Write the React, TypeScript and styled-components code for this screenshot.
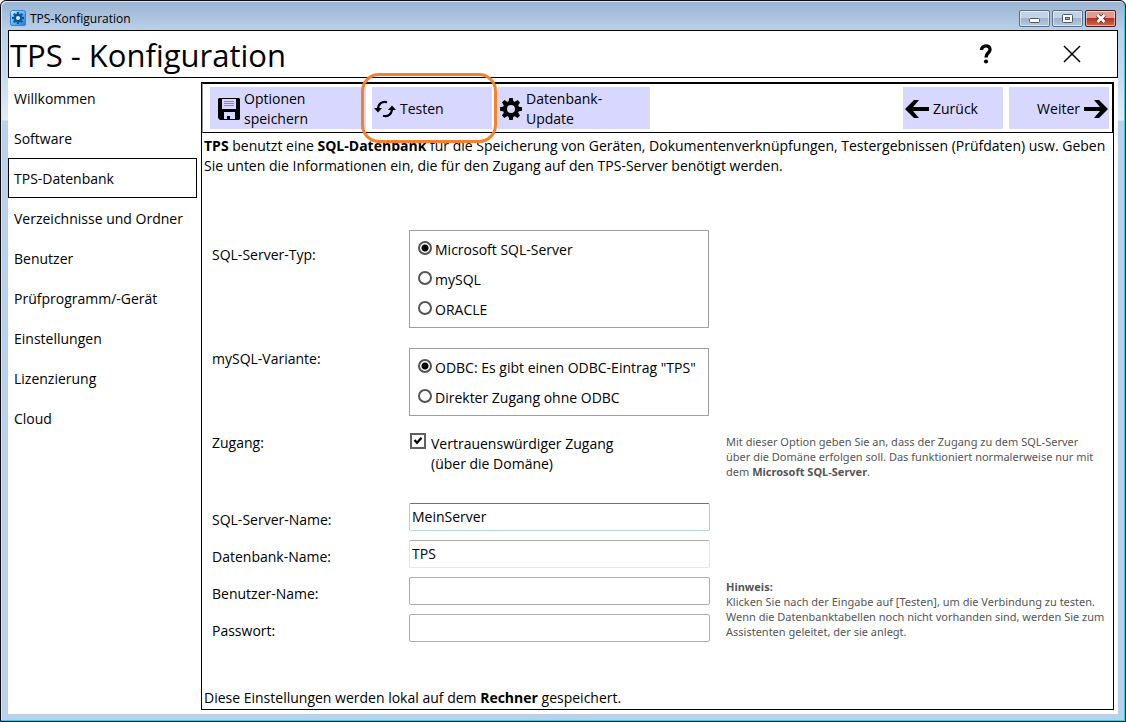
import React, { useState } from "react";
import styled, { createGlobalStyle, css } from "styled-components";

const GlobalStyle = createGlobalStyle`
  *, *::before, *::after { box-sizing: border-box; }
  body {
    margin: 0;
    background: #fff;
    color: #000;
    font-family: "Open Sans", "Noto Sans", sans-serif;
    font-size: 14px;
    line-height: 20px;
  }
  button, input { font: inherit; color: inherit; }
`;

const Window = styled.div`
  display: flex;
  flex-direction: column;
  min-height: 100vh;
  padding: 0 7px 7px;
  border: 1px solid #0c0c10;
  border-radius: 6px 6px 0 0;
  background: linear-gradient(
    #9ab3d0 0,
    #b9d1ea 30px,
    #c9dcf0 80px,
    #e2ecf7 119px,
    #b9d1ea 120px
  );
  box-shadow: inset -1px -1px 0 #2fd0ee, inset 1px 1px 0 #dce8f4;
`;

const TitleBar = styled.div`
  display: flex;
  align-items: center;
  gap: 4px;
  height: 29px;
  padding: 5px 2px 0;
  font-size: 12px;
  line-height: 16px;
`;

const WindowTitle = styled.span`
  flex: 1;
  padding-top: 1px;
`;

const Controls = styled.div`
  display: flex;
  gap: 2px;
`;

const ControlButton = styled.button<{ $danger?: boolean }>`
  display: flex;
  align-items: center;
  justify-content: center;
  width: 31px;
  height: 17px;
  padding: 0;
  border: 1px solid ${(p) => (p.$danger ? "#4a1f25" : "#5b6f86")};
  border-radius: 2px;
  box-shadow: inset 0 0 0 1px rgba(255, 255, 255, 0.5);
  background: ${(p) =>
    p.$danger
      ? "linear-gradient(#dd9c90 0 45%, #b9301c 50%, #cf6a50)"
      : "linear-gradient(#c3d3e6 0 45%, #9db3cd 50%, #b5cade)"};
`;

const Header = styled.header`
  display: flex;
  align-items: center;
  height: 48px;
  border: 1px solid #000;
  background: #fff;
`;

const Heading = styled.h1`
  flex: 1;
  margin: 0;
  padding: 2px 0 0 1px;
  font-size: 31px;
  font-weight: 400;
  line-height: 44px;
`;

const HeaderActions = styled.div`
  display: flex;
  gap: 50px;
  padding-right: 27px;
`;

const HeaderButton = styled.button`
  display: flex;
  align-items: center;
  justify-content: center;
  width: 36px;
  height: 36px;
  padding: 0;
  border: 0;
  background: none;
`;

const Body = styled.div`
  display: grid;
  grid-template-columns: 189px 1fr;
  gap: 4px;
  flex: 1;
  padding-right: 4px;
  background: #fff;
`;

const Nav = styled.nav`
  display: flex;
  flex-direction: column;
`;

const NavLink = styled.a<{ $active?: boolean }>`
  height: 40px;
  padding: 10px 5px 8px;
  border: 1px solid ${(p) => (p.$active ? "#000" : "transparent")};
  color: #000;
  text-decoration: none;
`;

const Panel = styled.main`
  display: flex;
  flex-direction: column;
  margin: 4px 0;
  border: 1px solid #000;
`;

const Toolbar = styled.div`
  display: flex;
  gap: 6px;
  padding: 3px 3px 3px 7px;
  border: 1px solid #000;
  border-left-color: #999;
`;

const ToolButton = styled.button<{ $width: number; $end?: boolean; $marked?: boolean }>`
  position: relative;
  display: flex;
  align-items: center;
  justify-content: ${(p) => (p.$end ? "flex-end" : "flex-start")};
  gap: 4px;
  width: ${(p) => p.$width}px;
  height: 42px;
  padding: 1px 1px 0 2px;
  border: 0;
  background: #d7d7ff;
  text-align: left;
  white-space: pre-line;
  ${(p) =>
    p.$marked &&
    css`
      &::after {
        content: "";
        position: absolute;
        inset: -14px -5px -14px -11px;
        border: 3px solid #f5822a;
        border-radius: 18px;
        pointer-events: none;
      }
    `}
`;

const Spacer = styled.div`
  flex: 1;
`;

const SaveIconSlot = styled.span`
  display: flex;
  padding-left: 6px;
`;

const Paragraph = styled.p`
  margin: 0;
  padding: 3px 2px 0;
`;

const FootNote = styled(Paragraph)`
  margin-top: auto;
  padding: 0 2px 1px;
`;

const Form = styled.form`
  display: grid;
  grid-template-columns: 197px 301px minmax(0, 1fr);
  padding: 54px 0 0 10px;
`;

const Label = styled.label`
  grid-column: 1;
  padding-top: 7px;
`;

const GroupLabel = styled.div`
  padding-top: 15px;
`;

const VariantLabel = styled(GroupLabel)`
  padding-top: 21px;
`;

const Group = styled.div<{ $gapBefore?: boolean }>`
  display: flex;
  flex-direction: column;
  grid-column: 2 / 4;
  gap: 10px;
  width: 300px;
  margin-top: ${(p) => (p.$gapBefore ? 20 : 0)}px;
  padding: 9px 0 7px 8px;
  border: 1px solid #a0a0a0;
`;

const Option = styled.label`
  display: flex;
  gap: 3px;
  white-space: nowrap;
`;

const Radio = styled.input.attrs({ type: "radio" })`
  appearance: none;
  width: 14px;
  height: 14px;
  margin: 1px 0 0;
  border: 2px solid #555;
  border-radius: 50%;
  background: #fff;
  &:checked {
    background: radial-gradient(circle, #000 0 3px, #fff 4px);
  }
`;

const AccessLabel = styled.div`
  padding-top: 17px;
`;

const AccessOption = styled.label`
  display: flex;
  gap: 5px;
  padding: 17px 0 0 1px;
`;

const AccessText = styled.span`
  padding-top: 1px;
`;

const CheckSlot = styled.span`
  display: grid;
  height: 16px;
  svg {
    grid-area: 1 / 1;
    pointer-events: none;
  }
`;

const Checkbox = styled.input.attrs({ type: "checkbox" })`
  appearance: none;
  grid-area: 1 / 1;
  width: 16px;
  height: 16px;
  margin: 0;
  border: 2px solid #606060;
  background: #fff;
  &:not(:checked) + svg {
    visibility: hidden;
  }
`;

const Hint = styled.p`
  margin: 0;
  padding: 18px 0 0 16px;
  color: #555;
  font-family: "Noto Sans", "Open Sans", sans-serif;
  font-size: 11px;
  line-height: 15px;
  white-space: nowrap;
`;

const FieldHint = styled(Hint)`
  grid-area: 3 / 3 / 5 / 4;
  padding-top: 2px;
`;

const Fields = styled.div`
  display: grid;
  grid-column: 1 / 4;
  grid-template-columns: 197px 301px minmax(0, 1fr);
  row-gap: 9px;
  padding-top: 24px;
`;

const tones = {
  active: "#3c7fb1 #a9cfe6 #b8d8e8",
  soft: "#abadb3 #e0e3ea #e3e9ef",
  plain: "#abadb3",
};

const TextInput = styled.input<{ $tone: keyof typeof tones }>`
  grid-column: 2;
  width: 100%;
  height: 28px;
  padding: 0 2px 1px;
  border: 1px solid;
  border-color: ${(p) => tones[p.$tone]};
  border-radius: 2px;
  outline: none;
  background: #fff;
`;

const AppIcon = () => (
  <svg width="16" height="16" viewBox="0 0 16 16" aria-hidden="true">
    <defs>
      <linearGradient id="app" x1="0" y1="0" x2="1" y2="1">
        <stop offset="0" stopColor="#e4f5ff" />
        <stop offset="0.5" stopColor="#62b5f5" />
        <stop offset="1" stopColor="#1476e4" />
      </linearGradient>
    </defs>
    <rect width="16" height="16" rx="2" fill="url(#app)" />
    <rect x="0.5" y="0.5" width="15" height="15" rx="2" fill="none" stroke="#2b84e0" />
    <g fill="#13568f" transform="translate(8 8)">
      {[0, 45, 90, 135].map((a) => (
        <rect key={a} x="-1.2" y="-6" width="2.4" height="12" transform={`rotate(${a})`} />
      ))}
      <circle r="4.3" />
    </g>
    <circle cx="8" cy="8" r="2" fill="#d7f0ff" />
  </svg>
);

const SaveIcon = () => (
  <svg width="22" height="22" viewBox="0 0 22 22" aria-hidden="true">
    <path d="M1 0H21L22 1V21L21 22H2L0 20V1Z" fill="#000" />
    <rect x="4" y="1" width="14" height="10" fill="#d7d7ff" />
    <path d="M6 3.5H16M6 5.5H16M6 7.500H16" stroke="#889" />
    <rect x="6" y="14" width="11" height="7" fill="#d7d7ff" />
    <path d="M9 18H12V22H9Z" fill="#000" />
  </svg>
);

const RefreshIcon = () => (
  <svg width="22" height="20" viewBox="0 0 22 20" aria-hidden="true">
    <g fill="none" stroke="#000" strokeWidth="2.200">
      <path d="M13 3.2C8 1.6 4.2 5 4 10" />
      <path d="M9 16.8C14 18.4 17.800 15 18 10" />
    </g>
    <path d="M0 9H8L4 13.500Z" />
    <path d="M22 11H14L18 6.500Z" />
  </svg>
);

const GearIcon = () => (
  <svg width="22" height="22" viewBox="-11 -11 22 22" aria-hidden="true">
    {[0, 45, 90, 135].map((a) => (
      <path key={a} d="M-2.600 -7L-1.700 -11H1.700L2.600 -7V7L1.700 11H-1.700L-2.600 7Z" transform={`rotate(${a})`} />
    ))}
    <circle r="8" />
    <circle r="4" fill="#d7d7ff" />
  </svg>
);

const ArrowIcon = ({ back }: { back?: boolean }) => (
  <svg width="24" height="20" viewBox="0 0 24 20" aria-hidden="true">
    <path
      d={
        back
          ? "M0 10L9 1H14L8 8H24V12H8L14 19H9Z"
          : "M24 10L15 1H10L16 8H0V12H16L10 19H15Z"
      }
    />
  </svg>
);

const HelpIcon = () => (
  <svg width="14" height="20" viewBox="0 0 14 20" aria-hidden="true">
    <path d="M2.500 6C2.500 0.800 11 0.500 11 5.500C11 9 7 8.500 7 13.500" fill="none" stroke="#000" strokeWidth="3.400" />
    <circle cx="7" cy="17.500" r="2.100" />
  </svg>
);

const CloseIcon = () => (
  <svg width="18" height="18" viewBox="0 0 18 18" aria-hidden="true">
    <path d="M1 1L17 17M17 1L1 17" stroke="#000" strokeWidth="1.500" />
  </svg>
);

const CheckMark = () => (
  <svg width="16" height="16" viewBox="0 0 16 16" aria-hidden="true">
    <path d="M4.500 7L7 9.800L11.500 4.800" fill="none" stroke="#000" strokeWidth="2.200" />
  </svg>
);

const MinimizeGlyph = () => (
  <svg width="11" height="11" viewBox="0 0 11 11" aria-hidden="true">
    <rect x="0.500" y="5.500" width="10" height="4" rx="1" fill="#fff" stroke="#535666" />
  </svg>
);

const MaximizeGlyph = () => (
  <svg width="11" height="9" viewBox="0 0 11 9" aria-hidden="true">
    <rect x="0.500" y="0.500" width="10" height="8" rx="1" fill="#fff" stroke="#535666" />
    <rect x="3.500" y="3.500" width="4" height="2" fill="#9db3cd" stroke="#535666" />
  </svg>
);

const CrossGlyph = () => (
  <svg width="12" height="11" viewBox="0 0 12 11" aria-hidden="true">
    <path d="M2.500 2L9.500 9M9.500 2L2.500 9" stroke="#5b3038" strokeWidth="4.400" />
    <path d="M2.500 2L9.500 9M9.500 2L2.500 9" stroke="#fff" strokeWidth="2.600" />
  </svg>
);

const sections = [
  "Willkommen",
  "Software",
  "TPS-Datenbank",
  "Verzeichnisse und Ordner",
  "Benutzer",
  "Prüfprogramm/-Gerät",
  "Einstellungen",
  "Lizenzierung",
  "Cloud",
];

const serverTypes = ["Microsoft SQL-Server", "mySQL", "ORACLE"];
const variants = ['ODBC: Es gibt einen ODBC-Eintrag "TPS"', "Direkter Zugang ohne ODBC"];

const fields: { id: string; label: string; value: string; tone: keyof typeof tones; type: string }[] = [
  { id: "server", label: "SQL-Server-Name:", value: "MeinServer", tone: "active", type: "text" },
  { id: "database", label: "Datenbank-Name:", value: "TPS", tone: "soft", type: "text" },
  { id: "user", label: "Benutzer-Name:", value: "", tone: "plain", type: "text" },
  { id: "password", label: "Passwort:", value: "", tone: "plain", type: "password" },
];

const RadioList = ({ name, options }: { name: string; options: string[] }) => {
  const [selected, setSelected] = useState(options[0]);
  return (
    <>
      {options.map((option) => (
        <Option key={option}>
          <Radio name={name} checked={selected === option} onChange={() => setSelected(option)} />
          {option}
        </Option>
      ))}
    </>
  );
};

export default function App() {
  return (
    <>
      <GlobalStyle />
      <Window>
        <TitleBar>
          <AppIcon />
          <WindowTitle>TPS-Konfiguration</WindowTitle>
          <Controls>
            <ControlButton aria-label="Minimieren"><MinimizeGlyph /></ControlButton>
            <ControlButton aria-label="Maximieren"><MaximizeGlyph /></ControlButton>
            <ControlButton aria-label="Schließen" $danger><CrossGlyph /></ControlButton>
          </Controls>
        </TitleBar>
        <Header>
          <Heading>TPS - Konfiguration</Heading>
          <HeaderActions>
            <HeaderButton aria-label="Hilfe"><HelpIcon /></HeaderButton>
            <HeaderButton aria-label="Beenden"><CloseIcon /></HeaderButton>
          </HeaderActions>
        </Header>
        <Body>
          <Nav>
            {sections.map((name) => (
              <NavLink key={name} href="#" $active={name === "TPS-Datenbank"}>
                {name}
              </NavLink>
            ))}
          </Nav>
          <Panel>
            <Toolbar>
              <ToolButton $width={156}>
                <SaveIconSlot><SaveIcon /></SaveIconSlot>
                {"Optionen\nspeichern"}
              </ToolButton>
              <ToolButton $width={120} $marked>
                <RefreshIcon />
                Testen
              </ToolButton>
              <ToolButton $width={152}>
                <GearIcon />
                {"Datenbank-\nUpdate"}
              </ToolButton>
              <Spacer />
              <ToolButton $width={100}>
                <ArrowIcon back />
                Zurück
              </ToolButton>
              <ToolButton $width={100} $end>
                Weiter
                <ArrowIcon />
              </ToolButton>
            </Toolbar>
            <Paragraph>
              <b>TPS</b> benutzt eine <b>SQL-Datenbank</b> für die Speicherung von Geräten,
              Dokumentenverknüpfungen, Testergebnissen (Prüfdaten) usw. Geben Sie unten die
              Informationen ein, die für den Zugang auf den TPS-Server benötigt werden.
            </Paragraph>
            <Form onSubmit={(e) => e.preventDefault()}>
              <GroupLabel id="type-label">SQL-Server-Typ:</GroupLabel>
              <Group role="radiogroup" aria-labelledby="type-label">
                <RadioList name="type" options={serverTypes} />
              </Group>
              <VariantLabel id="variant-label">mySQL-Variante:</VariantLabel>
              <Group role="radiogroup" aria-labelledby="variant-label" $gapBefore>
                <RadioList name="variant" options={variants} />
              </Group>
              <AccessLabel>Zugang:</AccessLabel>
              <AccessOption>
                <CheckSlot>
                  <Checkbox defaultChecked />
                  <CheckMark />
                </CheckSlot>
                <AccessText>
                  Vertrauenswürdiger Zugang
                  <br />
                  (über die Domäne)
                </AccessText>
              </AccessOption>
              <Hint>
                Mit dieser Option geben Sie an, dass der Zugang zu dem SQL-Server
                <br />
                über die Domäne erfolgen soll. Das funktioniert normalerweise nur mit
                <br />
                dem <b>Microsoft SQL-Server</b>.
              </Hint>
              <Fields>
                {fields.map((f) => (
                  <React.Fragment key={f.id}>
                    <Label htmlFor={f.id}>{f.label}</Label>
                    <TextInput id={f.id} type={f.type} defaultValue={f.value} $tone={f.tone} />
                  </React.Fragment>
                ))}
                <FieldHint>
                  <b>Hinweis:</b>
                  <br />
                  Klicken Sie nach der Eingabe auf [Testen], um die Verbindung zu testen.
                  <br />
                  Wenn die Datenbanktabellen noch nicht vorhanden sind, werden Sie zum
                  <br />
                  Assistenten geleitet, der sie anlegt.
                </FieldHint>
              </Fields>
            </Form>
            <FootNote>
              Diese Einstellungen werden lokal auf dem <b>Rechner</b> gespeichert.
            </FootNote>
          </Panel>
        </Body>
      </Window>
    </>
  );
}
